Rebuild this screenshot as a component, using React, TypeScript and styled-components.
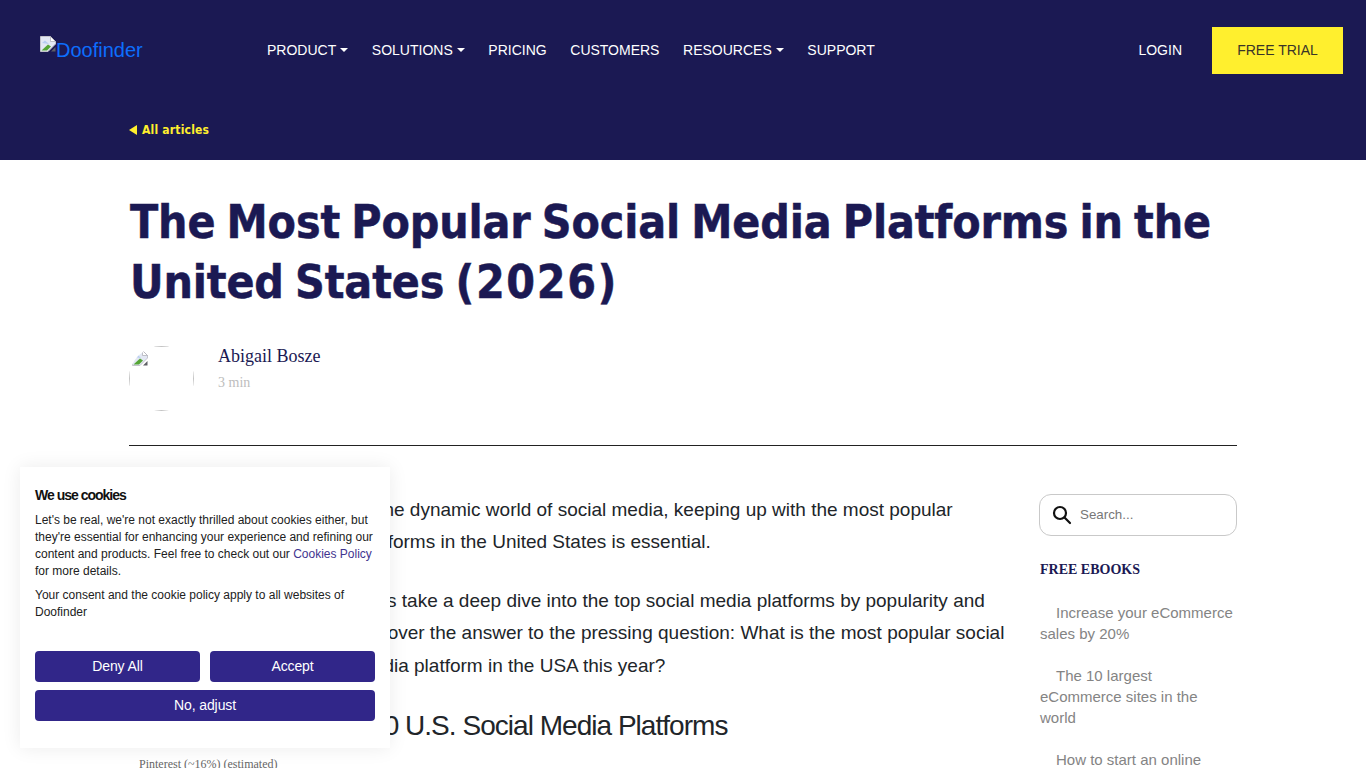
import React from "react";
import styled, { createGlobalStyle } from "styled-components";

const Global = createGlobalStyle`
  html, body { margin: 0; padding: 0; background: #fff; height: 768px; overflow: hidden; }
  * { box-sizing: border-box; }
`;

const Page = styled.div`
  width: 1366px;
  height: 768px;
  overflow: hidden;
  position: relative;
  font-family: "Liberation Sans", Arial, sans-serif;
`;

const Hero = styled.header`
  height: 160px;
  background: #1b1953;
  display: flex;
  flex-direction: column;
`;

const NavBar = styled.nav`
  display: flex;
  align-items: center;
  height: 100px;
  padding: 0 23px 0 40px;
`;

const Logo = styled.a`
  width: 227px;
  display: flex;
  align-items: flex-start;
  color: #0d6efd;
  font-size: 20px;
  line-height: 23px;
  height: 30px;
  padding-top: 4px;
`;

const LogoIcon = styled.span`
  margin-top: -3px;
  line-height: 0;
`;

const NavList = styled.div`
  display: flex;
  align-items: center;
  gap: 23.6px;
  flex: 1;
`;

const NavItem = styled.a`
  color: #fff;
  font-size: 14px;
  line-height: 16px;
  padding-bottom: 1px;
  display: flex;
  align-items: center;
  gap: 4px;
`;

const Caret = styled.span`
  width: 0;
  height: 0;
  margin-top: 1px;
  border-left: 4px solid transparent;
  border-right: 4px solid transparent;
  border-top: 4px solid #fff;
`;

const Login = styled.a`
  color: #fff;
  font-size: 14px;
  line-height: 16px;
  padding-bottom: 1px;
  margin-right: 30px;
`;

const Trial = styled.a`
  width: 131px;
  height: 47px;
  background: #ffef2e;
  color: #3a3428;
  font-size: 14px;
  padding-bottom: 1px;
  display: flex;
  align-items: center;
  justify-content: center;
`;

const BackRow = styled.div`
  padding-left: 129px;
  margin-top: 22px;
  display: flex;
  align-items: center;
  gap: 5px;
  color: #ffef2e;
  font-family: "DejaVu Sans Condensed", "DejaVu Sans", Verdana, sans-serif;
  font-stretch: condensed;
  font-weight: 700;
  font-size: 12px;
  line-height: 16px;
  letter-spacing: 0.2px;
`;

const BackArrow = styled.span`
  width: 0;
  height: 0;
  border-top: 5px solid transparent;
  border-bottom: 5px solid transparent;
  border-right: 8px solid #ffef2e;
`;

const Container = styled.main`
  width: 1108px;
  margin-left: 129px;
`;

const Title = styled.h1`
  margin: 32px 0 0 1px;
  color: #1b1953;
  font-family: "DejaVu Sans Condensed", "DejaVu Sans", Verdana, sans-serif;
  font-stretch: condensed;
  font-weight: 700;
  font-size: 46px;
  line-height: 60px;
  letter-spacing: -0.15px;
  word-spacing: -3px;
  -webkit-text-stroke: 0.5px #1b1953;
`;

const TitleYear = styled.span`
  letter-spacing: 1.6px;
`;

const Author = styled.div`
  display: flex;
  margin-top: 34px;
  padding-bottom: 34px;
  border-bottom: 1px solid #222;
`;

const Avatar = styled.div`
  width: 65px;
  height: 65px;
  border-radius: 50%;
  overflow: hidden;
  margin-right: 24px;
`;

const AvatarFrame = styled.div`
  width: 65px;
  height: 65px;
  border: 1px solid #c4c4c4;
  padding: 3px 2px;
  line-height: 0;
`;

const AuthorText = styled.div`
  font-family: "Liberation Serif", "Times New Roman", serif;
`;

const AuthorName = styled.div`
  color: #1b1953;
  font-size: 18px;
  line-height: 21px;
`;

const ReadTime = styled.div`
  color: #bdbdbd;
  font-size: 14px;
  line-height: 16px;
  margin-top: 8px;
`;

const Columns = styled.div`
  display: grid;
  grid-template-columns: 880px 198px;
  column-gap: 30px;
`;

const Article = styled.article`
  padding: 47.5px 3px 0 10px;
  color: #212529;
`;

const TocFloat = styled.div`
  float: left;
  width: 218px;
  height: 300px;
  padding-top: 263.5px;
  font-family: "Liberation Serif", serif;
  font-size: 12px;
  line-height: 14px;
  color: #666;
`;

const Para = styled.p`
  margin: 0 0 26.5px;
  font-size: 19px;
  line-height: 32.4px;
`;

const Heading = styled.h2`
  margin: 4px 0 0;
  color: #212529;
  font-weight: 400;
  font-size: 28px;
  line-height: 34px;
  letter-spacing: -0.97px;
  text-indent: -37px;
`;

const Sidebar = styled.aside`
  padding-top: 48px;
`;

const SearchBox = styled.div`
  height: 42px;
  border: 1px solid #c9c9c9;
  border-radius: 12px;
  display: flex;
  align-items: center;
  padding: 0 0 1px 11px;
  gap: 7px;
  color: #777;
  font-size: 13.33px;
`;

const SideTitle = styled.h3`
  margin: 25px 0 23px 1px;
  color: #1b1953;
  font-family: "Liberation Serif", serif;
  font-weight: 700;
  font-size: 14px;
  line-height: 18px;
`;

const SideLink = styled.a`
  display: block;
  color: #848484;
  font-size: 15px;
  line-height: 21px;
  margin: 0 0 21px 1px;
  text-indent: 16px;
`;

const Cookie = styled.section`
  position: absolute;
  left: 20px;
  top: 467px;
  width: 370px;
  height: 281px;
  background: #fff;
  padding: 20px 15px;
  box-shadow: 0 0 18px rgba(0, 0, 0, 0.08);
  color: #212121;
`;

const CookieTitle = styled.div`
  font-weight: 700;
  font-size: 14px;
  line-height: 17px;
  letter-spacing: -1px;
  color: #111;
  margin-bottom: 8px;
`;

const CookieText = styled.p`
  margin: 0 0 7px;
  font-size: 12px;
  line-height: 17px;
`;

const CookieLink = styled.a`
  color: #3f348f;
`;

const ButtonGrid = styled.div`
  display: grid;
  grid-template-columns: 1fr 1fr;
  gap: 8px 10px;
  margin-top: 30px;
`;

const CookieButton = styled.button<{ $wide?: boolean }>`
  height: 31px;
  border: 0;
  border-radius: 4px;
  background: #312689;
  color: #fff;
  font-family: inherit;
  font-size: 14px;
  letter-spacing: -0.1px;
  padding: 0 0 2px;
  grid-column: ${(p) => (p.$wide ? "1 / -1" : "auto")};
`;

const BrokenImage = () => (
  <svg width="16" height="16" viewBox="0 0 16 16">
    <path d="M0.5 0.5H10.5L15.5 5.5V8L8 15.5H0.5Z" fill="#e3e8f4" stroke="#c3c3cb" />
    <path d="M10.5 0.5V5.5H15.5Z" fill="#fff" stroke="#a9a9b2" strokeWidth="0.7" />
    <path d="M2 7L5 4.5L9 8Z" fill="#b7cdf1" />
    <path d="M1.5 14.5L8 8.5L11 10.5L7 14.5Z" fill="#55a535" />
    <path d="M11 15.5L15.5 11V15.5Z" fill="#5f5f66" />
  </svg>
);

const SearchIcon = () => (
  <svg width="22" height="22" viewBox="0 0 22 22" fill="none" stroke="#111" strokeWidth="2.2" strokeLinecap="round">
    <circle cx="9" cy="9" r="6" />
    <path d="M13.5 13.5L19 19" />
  </svg>
);

export default function App() {
  return (
    <Page>
      <Global />
      <Hero>
        <NavBar>
          <Logo>
            <LogoIcon><BrokenImage /></LogoIcon>
            Doofinder
          </Logo>
          <NavList>
            <NavItem>PRODUCT <Caret /></NavItem>
            <NavItem>SOLUTIONS <Caret /></NavItem>
            <NavItem>PRICING</NavItem>
            <NavItem>CUSTOMERS</NavItem>
            <NavItem>RESOURCES <Caret /></NavItem>
            <NavItem>SUPPORT</NavItem>
          </NavList>
          <Login>LOGIN</Login>
          <Trial>FREE TRIAL</Trial>
        </NavBar>
        <BackRow>
          <BackArrow />
          All articles
        </BackRow>
      </Hero>
      <Container>
        <Title>The Most Popular Social Media Platforms in the United States <TitleYear>(2026)</TitleYear></Title>
        <Author>
          <Avatar>
            <AvatarFrame>
              <BrokenImage />
            </AvatarFrame>
          </Avatar>
          <AuthorText>
            <AuthorName>Abigail Bosze</AuthorName>
            <ReadTime>3 min</ReadTime>
          </AuthorText>
        </Author>
        <Columns>
          <Article>
            <TocFloat>Pinterest (~16%) (estimated)</TocFloat>
            <Para>In the dynamic world of social media, keeping up with the most popular platforms in the United States is essential.</Para>
            <Para>Let's take a deep dive into the top social media platforms by popularity and uncover the answer to the pressing question: What is the most popular social media platform in the USA this year?</Para>
            <Heading>Top 10 U.S. Social Media Platforms</Heading>
          </Article>
          <Sidebar>
            <SearchBox>
              <SearchIcon />
              Search...
            </SearchBox>
            <SideTitle>FREE EBOOKS</SideTitle>
            <SideLink>Increase your eCommerce sales by 20%</SideLink>
            <SideLink>The 10 largest eCommerce sites in the world</SideLink>
            <SideLink>How to start an online</SideLink>
          </Sidebar>
        </Columns>
      </Container>
      <Cookie>
        <CookieTitle>We use cookies</CookieTitle>
        <CookieText>
          Let's be real, we're not exactly thrilled about cookies either, but they're essential for enhancing your experience and refining our content and products. Feel free to check out our <CookieLink>Cookies Policy</CookieLink> for more details.
        </CookieText>
        <CookieText>Your consent and the cookie policy apply to all websites of Doofinder</CookieText>
        <ButtonGrid>
          <CookieButton>Deny All</CookieButton>
          <CookieButton>Accept</CookieButton>
          <CookieButton $wide>No, adjust</CookieButton>
        </ButtonGrid>
      </Cookie>
    </Page>
  );
}
